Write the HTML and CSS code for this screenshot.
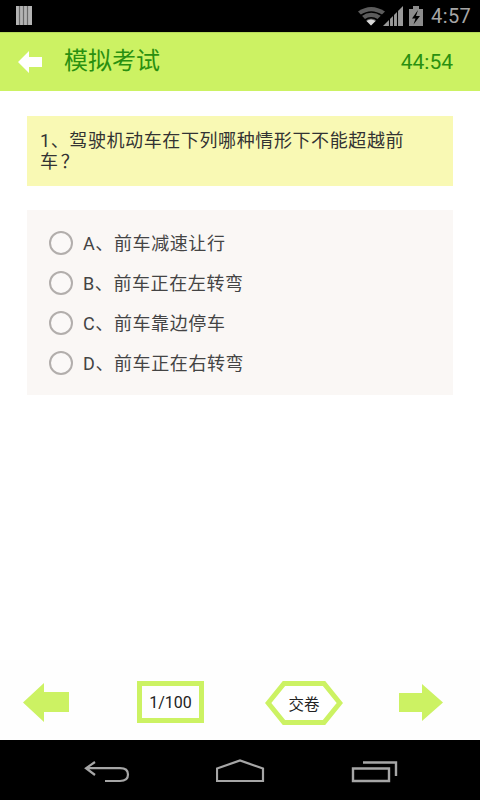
FILE: index.html
```html
<!DOCTYPE html>
<html lang="zh">
<head>
<meta charset="utf-8">
<title>模拟考试</title>
<link rel="stylesheet" href="styles.css">
</head>
<body>
<div class="phone">
  <div class="status">
    <svg class="sb-left" width="16" height="19" viewBox="0 0 16 19"><rect width="16" height="19" fill="#b4b4b4"/><path d="M3.500 0v19M7.500 0v19M11.500 0v19" stroke="#6a6a6a" stroke-width="1.200"/></svg>
    <div class="sb-right">
      <svg class="sb-icons" width="82" height="20" viewBox="0 0 82 20">
        <path d="M29 19.500 L16 5.500 Q29 -3.500 43 5.500Z" fill="#5c5c5c"/>
        <path d="M19 9.500 Q29 2.500 40 9.500" fill="none" stroke="#000" stroke-width="1.600"/>
        <path d="M23 14 Q29 9.500 35.500 14" fill="none" stroke="#000" stroke-width="1.600"/>
        <path d="M29 19.500 L24.500 15 Q29 12 33.500 15Z" fill="#d8d8d8"/>
        <path d="M41 20 L61 0 V20Z" fill="#9a9a9a"/>
        <path d="M47.500 20V13M51.500 20V9M55.500 20V5" stroke="#000" stroke-width="1.100"/>
        <path d="M67 3h4V0h6v3h4v17H67Z" fill="#8c8c8c"/>
        <path d="M76 4 L70 12.500 H73.500 L71.500 18.500 L78 10 H74Z" fill="#000"/>
      </svg>
      <span class="clock">4:57</span>
    </div>
  </div>
  <header class="bar">
    <svg class="back" width="24" height="22" viewBox="0 0 24 22"><path d="M0 11 L11 0 V6 H24 V16 H11 V22Z" fill="#fff"/></svg>
    <h1 class="title">模拟考试</h1>
    <span class="timer">44:54</span>
  </header>
  <main class="content">
    <div class="question">1、驾驶机动车在下列哪种情形下不能超越前车&#8239;？</div>
    <div class="options">
      <div class="option"><span class="radio"></span><span class="opt-text">A、前车减速让行</span></div>
      <div class="option"><span class="radio"></span><span class="opt-text">B、前车正在左转弯</span></div>
      <div class="option"><span class="radio"></span><span class="opt-text">C、前车靠边停车</span></div>
      <div class="option"><span class="radio"></span><span class="opt-text">D、前车正在右转弯</span></div>
    </div>
  </main>
  <footer class="tools">
    <svg class="prev" width="46" height="39" viewBox="0 0 46 39"><path d="M0 19.500 L21 0 V9 H46 V29 H21 V39Z" fill="#ccf263"/></svg>
    <div class="page">1/100</div>
    <div class="submit">
      <svg width="78" height="44" viewBox="0 0 78 44"><path d="M19 2.500 H59 L74.800 22 L59 41.500 H19 L3.200 22Z" fill="#fff" stroke="#ccf263" stroke-width="5"/></svg>
      <span class="submit-label">交卷</span>
    </div>
    <svg class="next" width="44" height="37" viewBox="0 0 44 37"><path d="M44 18.500 L23 0 V9 H0 V28 H23 V37Z" fill="#ccf263"/></svg>
  </footer>
  <nav class="nav">
    <svg width="46" height="24" viewBox="0 0 46 24"><path d="M11 3 L2 9.200 L11 16 M2 9.200 H36 Q44 9.200 44 15.500 Q44 22 36 22 H21" fill="none" stroke="#a6a6a6" stroke-width="2.200"/></svg>
    <svg width="50" height="24" viewBox="0 0 50 24"><path d="M1 22 V9.500 L24 1.500 L47 9.500 V22Z" fill="none" stroke="#a6a6a6" stroke-width="2.200"/></svg>
    <svg width="47" height="24" viewBox="0 0 47 24"><path d="M2 9.500 H38 V22 H2Z M12 3.500 H45 V17" fill="none" stroke="#a6a6a6" stroke-width="2.400"/></svg>
  </nav>
</div>
</body>
</html>
```
FILE: styles.css
```css
* { box-sizing: border-box; margin: 0; padding: 0; }
html, body { background: #fff; }
body { font-family: "Roboto", "Noto Sans CJK SC", sans-serif; }
.phone { width: 480px; height: 800px; display: flex; flex-direction: column; overflow: hidden; }
.status { height: 32px; flex: none; background: #000; display: flex; align-items: center; justify-content: space-between; padding-left: 16px; padding-right: 9px; }
.sb-left { display: block; margin-top: -1px; }
.sb-right { display: flex; align-items: center; gap: 7px; }
.sb-icons { display: block; margin-top: -1px; }
.clock { font-size: 20px; color: #a6a6a6; width: 40px; letter-spacing: .4px; }
.bar { height: 59px; flex: none; background: #ccf263; display: flex; align-items: center; padding: 0 27px 0 18px; border-top: 1px solid #b7da5a; }
.back { display: block; }
.title { font-size: 24px; line-height: 30px; font-weight: 400; color: #2a9010; margin-left: 22px; flex: 1; padding-bottom: 2px; }
.timer { font-size: 21px; color: #2a9010; }
.content { flex: 1; padding: 25px 27px 0; }
.question { background: #f9f9b4; padding: 14px 14px 0 13px; font-size: 18px; letter-spacing: .6px; line-height: 21px; color: #333; height: 70px; }
.options { margin-top: 24px; background: #faf7f5; height: 185px; padding: 13px 22px 0; display: flex; flex-direction: column; }
.option { height: 40px; display: flex; align-items: center; gap: 10px; font-size: 18px; letter-spacing: .6px; color: #444; flex: none; }
.opt-text { line-height: 24px; padding-top: 1px; }
.radio { width: 24px; height: 24px; border-radius: 50%; border: 2px solid #b2aeac; background: #fbf9f8; flex: none; }
.tools { height: 80px; flex: none; background: #fefefe; display: flex; align-items: center; padding: 4px 0 0 23px; }
.page { width: 67px; height: 42px; margin-left: 68px; border: 5px solid #ccf263; display: flex; align-items: center; justify-content: center; font-size: 16px; color: #222; }
.submit { position: relative; width: 78px; height: 44px; margin-left: 61px; margin-top: 2px; }
.submit svg { display: block; }
.submit-label { position: absolute; inset: 0; display: flex; align-items: center; justify-content: center; font-size: 15.5px; color: #222; }
.next { margin-left: 56px; }
.nav { height: 60px; flex: none; background: #000; display: flex; align-items: center; justify-content: space-between; padding: 2px 82px 0 84px; }
```
